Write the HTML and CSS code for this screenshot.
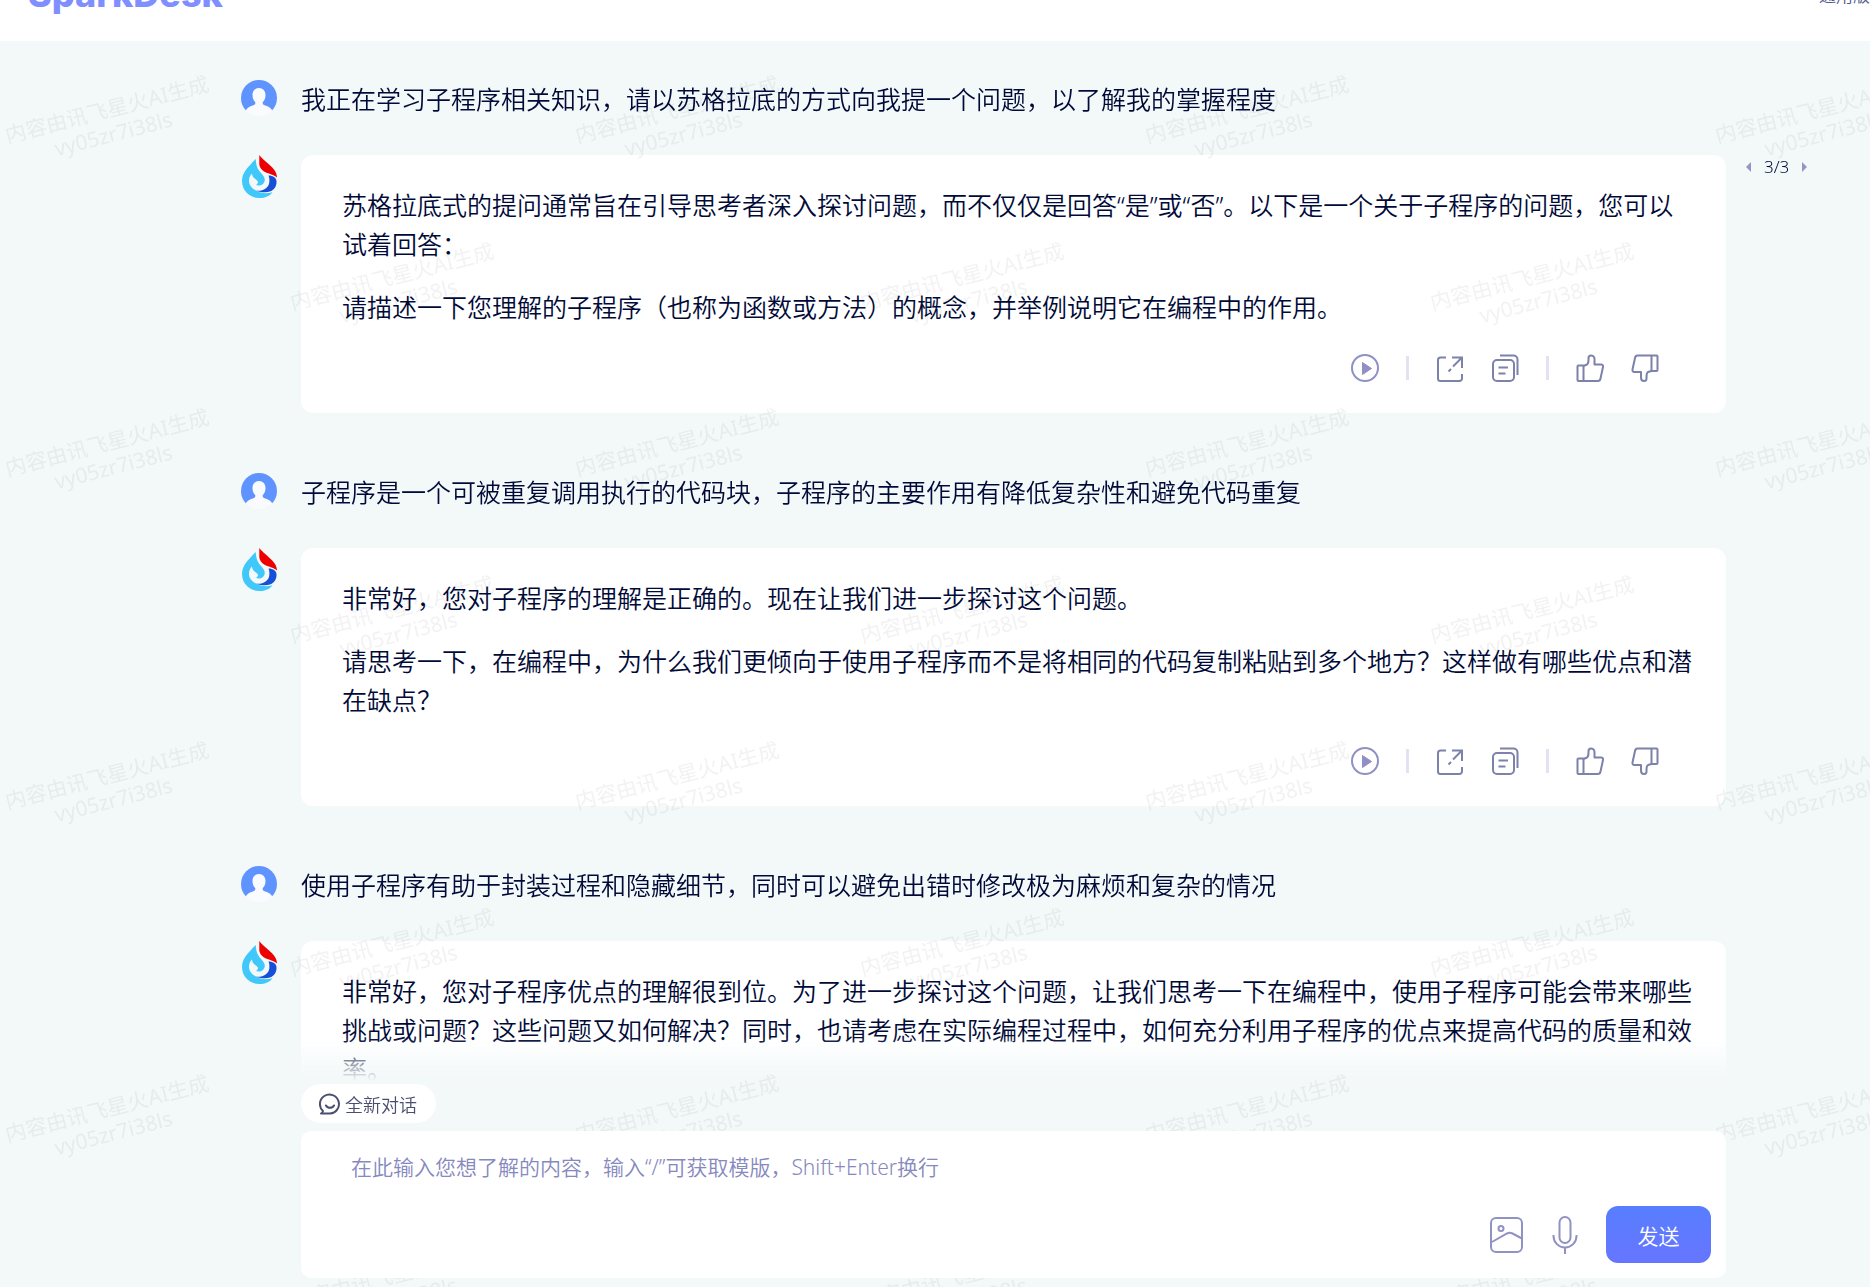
FILE: index.html
```html
<!DOCTYPE html>
<html lang="zh-CN">
<head>
  <meta charset="UTF-8">
  <meta name="viewport" content="width=device-width, initial-scale=1.0">
  <title>SparkDesk</title>
  <link rel="stylesheet" href="styles.css">
</head>
<body>

<svg class="sprite" width="0" height="0" aria-hidden="true">
  <symbol id="user" viewBox="0 0 36 36">
    <circle cx="18" cy="18" r="18" fill="#5f93ff"/>
    <path d="M18 8c4 0 6.500 3 6.500 7 0 3-1 5.500-2.700 7-.6 2.500.7 3 3.200 3.800 3 .9 4.500 2 6.500 4.900C28 34 23 37 18 37S8 34 4.500 30.700C6.500 27.800 8 26.700 11 25.800c2.500-.8 3.800-1.300 3.200-3.800-1.700-1.500-2.700-4-2.700-7 0-4 2.500-7 6.500-7z" fill="#f9fbff"/>
  </symbol>
  <symbol id="spark" viewBox="0 0 36 43">
    <path d="M14.700 4C8 11 1 17 1 26c0 10 8 17 17.500 17 5.500 0 10.500-2 13-6-4.500 2-11.500 1.500-16.500-1.500-5-2.500-7-6-7-10 0-3 1-5 3-7 0 3 2 4.500 4.500 6.500s1.500 3.500-.5 5c4 1.500 8.500-.5 8.800-5 .2-4-4.800-7.500-6.800-11-1.500-3-2-6-2.300-10z" fill="#41c8fb"/>
    <path d="M18.300 0C22 5 31 11 34 16c1.500 2.500 2 5 2 6.500-3-3-8-3.500-12-5.500-3.500-2-6-5-5.700-9z" fill="#ee0000"/>
    <path d="M27.500 20.500c4.500 0 8.500 2 8 7.500-1 7-6.500 12-20.500 7.700 7 .8 12.500-2.700 13.300-8.200.3-3 0-5-.8-7z" fill="#1650d8"/>
  </symbol>
  <symbol id="play" viewBox="0 0 28 28">
    <circle cx="14" cy="14" r="13" fill="none" stroke="currentColor" stroke-width="2"/>
    <path d="M11.500 8.500v12l9-6z" fill="currentColor" stroke="currentColor" stroke-linejoin="round"/>
  </symbol>
  <symbol id="share" viewBox="0 0 28 28">
    <path d="M10 3.500H4.500a2.500 2.500 0 0 0-2.500 2.500v18.500a2.500 2.500 0 0 0 2.500 2.500h19a2.500 2.500 0 0 0 2.500-2.500V20M16 3.500h10V14M26 3.500l-9 9M15 15l-2.500 2.500" fill="none" stroke="currentColor" stroke-width="2"/>
  </symbol>
  <symbol id="copy" viewBox="0 0 28 28">
    <rect x="2" y="6" width="21" height="21" rx="4" fill="none" stroke="currentColor" stroke-width="2"/>
    <path d="M9 1.500h13.500a4 4 0 0 1 4 4V21M7.500 13.500h9.500M7.500 19.500h7" fill="none" stroke="currentColor" stroke-width="2"/>
  </symbol>
  <symbol id="like" viewBox="0 0 28 28">
    <path d="M2.500 11.500h5v15.500h-5a1 1 0 0 1-1-1V12.500a1 1 0 0 1 1-1zM7.500 12l3.500-1.500c1.300-.8 1.500-2.500 1.500-5V4c0-1.500 1-2.500 2.500-2.500s3.500 1 3.500 3.500v5.500h6.500c1.500 0 2.300 1 2 2.500l-2.500 11.500c-.3 1.500-1 2.500-2.500 2.500h-14.500" fill="none" stroke="currentColor" stroke-width="2" stroke-linejoin="round"/>
  </symbol>
  <symbol id="dislike" viewBox="0 0 28 28">
    <path d="M20.500 1.500h5a1 1 0 0 1 1 1V16a1 1 0 0 1-1 1h-5zM20.500 17l-3.500 1c-1.300.8-1.500 2.500-1.500 5v1.500c0 1.500-1 2.500-2.500 2.500s-3-1-3-3.500V18H3.500c-1.500 0-2.300-1-2-2.500L4 4c.3-1.500 1-2.500 2.500-2.500h14" fill="none" stroke="currentColor" stroke-width="2" stroke-linejoin="round"/>
  </symbol>
</svg>

<svg class="watermark" aria-hidden="true">
  <defs>
    <pattern id="mark" width="570" height="333" patternUnits="userSpaceOnUse">
      <g transform="translate(109 117) rotate(-14.500)">
        <text text-anchor="middle">内容由讯飞星火AI生成</text>
        <text text-anchor="middle" y="25">vy05zr7i38ls</text>
      </g>
      <g transform="translate(394 284) rotate(-14.500)">
        <text text-anchor="middle">内容由讯飞星火AI生成</text>
        <text text-anchor="middle" y="25">vy05zr7i38ls</text>
      </g>
    </pattern>
  </defs>
  <rect width="100%" height="100%" fill="url(#mark)"/>
</svg>

<header class="header">
  <div class="logo">SparkDesk</div>
  <a class="edition" href="#">通用版</a>
</header>

<main class="chat">
  <section class="turn">
    <div class="row">
      <svg class="avatar"><use href="#user"/></svg>
      <p class="question">我正在学习子程序相关知识，请以苏格拉底的方式向我提一个问题，以了解我的掌握程度</p>
    </div>
    <div class="row">
      <svg class="avatar spark"><use href="#spark"/></svg>
      <div class="card">
        <p>苏格拉底式的提问通常旨在引导思考者深入探讨问题，而不仅仅是回答“是”或“否”。以下是一个关于子程序的问题，您可以试着回答：</p>
        <p>请描述一下您理解的子程序（也称为函数或方法）的概念，并举例说明它在编程中的作用。</p>
        <div class="actions">
          <button class="play" aria-label="播放"><svg><use href="#play"/></svg></button>
          <span class="divider"></span>
          <button aria-label="分享"><svg><use href="#share"/></svg></button>
          <button aria-label="复制"><svg><use href="#copy"/></svg></button>
          <span class="divider"></span>
          <button aria-label="赞"><svg><use href="#like"/></svg></button>
          <button aria-label="踩"><svg><use href="#dislike"/></svg></button>
        </div>
      </div>
      <div class="pager">
        <button aria-label="上一条"><svg viewBox="0 0 5 10"><path d="M5 0v10L0 5z"/></svg></button>
        <span>3/3</span>
        <button aria-label="下一条"><svg viewBox="0 0 5 10"><path d="M0 0v10l5-5z"/></svg></button>
      </div>
    </div>
  </section>

  <section class="turn">
    <div class="row">
      <svg class="avatar"><use href="#user"/></svg>
      <p class="question">子程序是一个可被重复调用执行的代码块，子程序的主要作用有降低复杂性和避免代码重复</p>
    </div>
    <div class="row">
      <svg class="avatar spark"><use href="#spark"/></svg>
      <div class="card">
        <p>非常好，您对子程序的理解是正确的。现在让我们进一步探讨这个问题。</p>
        <p>请思考一下，在编程中，为什么我们更倾向于使用子程序而不是将相同的代码复制粘贴到多个地方？这样做有哪些优点和潜在缺点？</p>
        <div class="actions">
          <button class="play" aria-label="播放"><svg><use href="#play"/></svg></button>
          <span class="divider"></span>
          <button aria-label="分享"><svg><use href="#share"/></svg></button>
          <button aria-label="复制"><svg><use href="#copy"/></svg></button>
          <span class="divider"></span>
          <button aria-label="赞"><svg><use href="#like"/></svg></button>
          <button aria-label="踩"><svg><use href="#dislike"/></svg></button>
        </div>
      </div>
    </div>
  </section>

  <section class="turn">
    <div class="row">
      <svg class="avatar"><use href="#user"/></svg>
      <p class="question">使用子程序有助于封装过程和隐藏细节，同时可以避免出错时修改极为麻烦和复杂的情况</p>
    </div>
    <div class="row">
      <svg class="avatar spark"><use href="#spark"/></svg>
      <div class="card">
        <p>非常好，您对子程序优点的理解很到位。为了进一步探讨这个问题，让我们思考一下在编程中，使用子程序可能会带来哪些挑战或问题？这些问题又如何解决？同时，也请考虑在实际编程过程中，如何充分利用子程序的优点来提高代码的质量和效率。</p>
      </div>
    </div>
  </section>
</main>

<footer class="footer">
  <button class="new-chat">
    <svg viewBox="0 0 22 22"><path d="M4 18A9.500 9.500 0 1 1 11 20.500H2c1-.6 1.600-1.300 2-2.500zM7 12.500c1.500 3 6.500 3 8 0" fill="none" stroke="currentColor" stroke-width="2" stroke-linejoin="round" stroke-linecap="round"/></svg>
    全新对话
  </button>
  <form class="composer">
    <textarea aria-label="输入内容" rows="1" placeholder="在此输入您想了解的内容，输入“/”可获取模版，Shift+Enter换行"></textarea>
    <div class="tools">
      <button type="button" class="tool" aria-label="图片">
        <svg width="34" height="38" viewBox="0 0 34 38"><g fill="none" stroke="currentColor" stroke-width="2"><rect x="1" y="2" width="31" height="34" rx="5"/><circle cx="11" cy="12.500" r="2.500"/><path d="M2 26l15-8.500c2-1 3.500-1 5.500 0l9.500 5"/></g></svg>
      </button>
      <button type="button" class="tool" aria-label="语音">
        <svg width="26" height="38" viewBox="0 0 26 38"><g fill="none" stroke="currentColor" stroke-width="2"><rect x="7.500" y="1" width="11" height="26" rx="5.500"/><path d="M1.500 19v1a11.500 11.500 0 0 0 23 0v-1M13 31.500V38"/></g></svg>
      </button>
      <button type="button" class="send">发送</button>
    </div>
  </form>
</footer>

</body>
</html>
```
FILE: styles.css
```css
* {
  box-sizing: border-box;
}

body {
  margin: 0;
  height: 100vh;
  display: flex;
  flex-direction: column;
  overflow: hidden;
  position: relative;
  background: #f3f8f9;
  color: #000a38;
  font-family: "Noto Sans", "Noto Sans CJK SC", sans-serif;
  font-weight: 350;
}

p {
  margin: 0;
}

button {
  padding: 0;
  border: none;
  background: none;
  color: inherit;
  font: inherit;
  cursor: pointer;
}

.sprite {
  position: absolute;
}

.watermark {
  position: absolute;
  inset: 0;
  width: 100%;
  height: 100%;
  z-index: 1;
  pointer-events: none;
  font-size: 21px;
  font-weight: 400;
  fill: rgba(0, 0, 0, 0.05);
}

/* the header is partly scrolled off the top */
.header {
  flex: none;
  height: 94px;
  margin-top: -53px;
  padding-left: 28px;
  display: flex;
  align-items: center;
  justify-content: space-between;
  background: #fff;
  position: relative;
  z-index: 2;
}

.logo {
  font-family: Inter, sans-serif;
  font-size: 36px;
  font-weight: 800;
  color: #7f8fff;
}

.edition {
  font-size: 17px;
  color: #52588c;
  text-decoration: none;
}

.chat {
  flex: 1;
  min-height: 0;
  overflow: hidden;
  padding: 39px 20px 0 241px;
  display: flex;
  flex-direction: column;
  gap: 60px;
  -webkit-mask-image: linear-gradient(to top, transparent, #000 44px);
  mask-image: linear-gradient(to top, transparent, #000 44px);
}

.turn {
  flex: none;
  display: flex;
  flex-direction: column;
  gap: 39px;
}

.row {
  display: grid;
  grid-template-columns: 36px minmax(0, 1fr) 100px;
  column-gap: 24px;
  align-items: start;
}

.avatar {
  width: 36px;
  height: 36px;
}

.spark {
  height: 43px;
}

.question {
  font-size: 25px;
  line-height: 38px;
  margin-bottom: -2px;
}

.card {
  padding: 31px 33px 31px 41px;
  border-radius: 12px;
  background: #fff;
  font-size: 25px;
  line-height: 39px;
}

.card p + p {
  margin-top: 24px;
}

.actions {
  display: flex;
  justify-content: flex-end;
  align-items: center;
  gap: 27px;
  margin-top: 27px;
  padding-right: 34px;
  color: #7c82aa;
}

.actions button,
.actions svg {
  display: block;
  width: 28px;
  height: 28px;
}

.actions .play {
  color: #8f91c6;
}

.divider {
  width: 3px;
  height: 24px;
  background: #e2e2f2;
}

.pager {
  display: flex;
  align-items: center;
  gap: 13px;
  margin-left: -4px;
  font-size: 17px;
  line-height: 24px;
}

.pager svg {
  display: block;
  width: 5px;
  height: 10px;
  fill: #9495c6;
}

.footer {
  flex: none;
  padding: 3px 144px 9px 301px;
  position: relative;
  z-index: 2;
}

.new-chat {
  display: flex;
  align-items: center;
  gap: 4px;
  height: 39px;
  padding: 0 19px 0 18px;
  border-radius: 20px;
  background: #fff;
  color: #4a4f72;
  font-size: 18px;
}

.new-chat svg {
  width: 22px;
  height: 22px;
}

.composer {
  margin-top: 8px;
  padding: 20px 15px 15px 50px;
  border-radius: 10px;
  background: #fff;
}

.composer textarea {
  display: block;
  width: 100%;
  height: 32px;
  padding: 0;
  border: none;
  outline: none;
  resize: none;
  background: none;
  color: #000a38;
  font: inherit;
  font-size: 21px;
  line-height: 32px;
}

.composer textarea::placeholder {
  color: #8688be;
  opacity: 1;
}

.tools {
  display: flex;
  justify-content: flex-end;
  align-items: center;
  gap: 28px;
  margin-top: 23px;
}

.tool {
  color: #9092c4;
}

.tool svg {
  display: block;
}

.send {
  width: 105px;
  height: 57px;
  border-radius: 12px;
  background: linear-gradient(#587eff, #6675ff);
  color: #fff;
  font-size: 21px;
}
```
